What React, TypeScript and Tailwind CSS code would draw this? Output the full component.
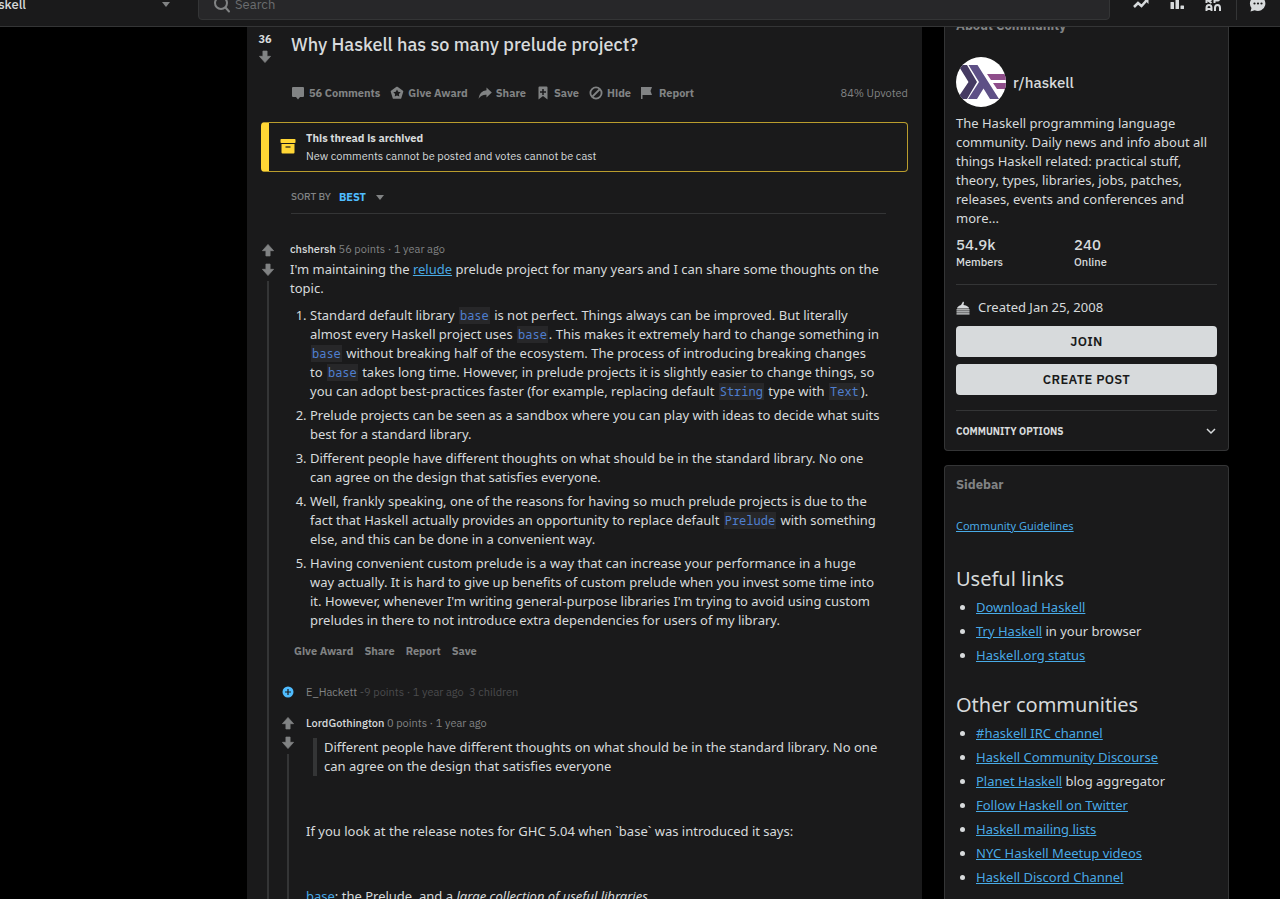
import type { ReactNode } from "react";

type LinkItem = { label: string; after?: string };

const usefulLinks: LinkItem[] = [
  { label: "Download Haskell" },
  { label: "Try Haskell", after: " in your browser" },
  { label: "Haskell.org status" },
];

const communities: LinkItem[] = [
  { label: "#haskell IRC channel" },
  { label: "Haskell Community Discourse" },
  { label: "Planet Haskell", after: " blog aggregator" },
  { label: "Follow Haskell on Twitter" },
  { label: "Haskell mailing lists" },
  { label: "NYC Haskell Meetup videos" },
  { label: "Haskell Discord Channel" },
];

const uiFont = "font-[family-name:'IBM_Plex_Sans','Inter',sans-serif]";

function Arrow({ down = false }: { down?: boolean }) {
  return (
    <svg
      viewBox="0 0 20 20"
      className={down ? "size-3.5 rotate-180" : "size-3.5"}
      fill="#818384"
      stroke="#818384"
      strokeWidth="1"
      strokeLinejoin="round"
    >
      <path d="M10 2 18 11H13v7.500H7V11H2Z" />
    </svg>
  );
}

function VoteButton({ down = false }: { down?: boolean }) {
  return (
    <button aria-label={down ? "downvote" : "upvote"} className="block">
      <Arrow down={down} />
    </button>
  );
}

function Caret() {
  return (
    <svg viewBox="0 0 8 5" className="h-[5px] w-2" fill="#818384">
      <path d="M0 0h8L4 5Z" />
    </svg>
  );
}

function HaskellLogo() {
  return (
    <svg viewBox="0 0 50 50" className="size-[50px] rounded-full bg-white">
      <path d="M2 8h9l10 17L11 42H1l11.500-17Z" fill="#453a62" />
      <path d="M12.500 8h9L43 42h-9l-6.500-10.500L21 42h-9l11-17Z" fill="#5e5086" />
      <path d="M31 17h19v6H35ZM37 26h13v6H41Z" fill="#8f4e8b" />
    </svg>
  );
}

function Code({ children }: { children: ReactNode }) {
  return (
    <code className="mx-px bg-[#272729] px-px font-[family-name:'Noto_Sans_Mono','DejaVu_Sans_Mono',monospace] text-xs leading-4 text-[#4f7fd0]">
      {children}
    </code>
  );
}

function TextLink({ children }: { children: ReactNode }) {
  return (
    <a href="#" className="text-[#4fbcff]/90 underline">
      {children}
    </a>
  );
}

function LinkList({ items }: { items: LinkItem[] }) {
  return (
    <ul className="list-disc space-y-[5px] pl-5">
      {items.map((item) => (
        <li key={item.label}>
          <TextLink>{item.label}</TextLink>
          {item.after}
        </li>
      ))}
    </ul>
  );
}

function Action({ icon, children }: { icon: ReactNode; children: ReactNode }) {
  return (
    <button className="flex items-center gap-1">
      {icon}
      {children}
    </button>
  );
}

function Header() {
  return (
    <header
      className={`relative z-10 -mt-[18px] flex h-[45px] shrink-0 items-center border-b border-[#343536] bg-[#1a1a1b] ${uiFont}`}
    >
      <button
        aria-label="r/haskell"
        className="flex w-[198px] shrink-0 items-center justify-between pr-7 text-[13px] font-medium text-[#d7dadc]"
      >
        <span className="flex w-[26px] justify-end overflow-hidden">r/haskell</span>
        <Caret />
      </button>
      <label className="flex h-8 flex-1 items-center gap-1 rounded border border-[#343536] bg-[#272729] pl-3.5">
        <svg viewBox="0 0 18 18" className="size-[18px]" fill="none" stroke="#818384" strokeWidth="2">
          <circle cx="8" cy="8" r="6" />
          <path d="m12.500 12.500 3.500 4" strokeLinecap="round" />
        </svg>
        <input
          aria-label="Search"
          placeholder="Search"
          className="flex-1 bg-transparent text-[13px] text-[#d7dadc] outline-none placeholder:text-[#6b6d6f]"
        />
      </label>
      <nav className="flex w-[170px] shrink-0 items-center pl-[22px] text-[#d7dadc]">
        <button aria-label="Popular" className="w-9">
          <svg viewBox="0 0 18 18" className="size-[18px]" fill="none" stroke="currentColor" strokeWidth="2.500">
            <path d="m2 12 4-4 3.500 3L15 5" />
            <path d="M10.500 3H16.500V9Z" fill="currentColor" stroke="none" />
          </svg>
        </button>
        <button aria-label="All" className="w-9">
          <svg viewBox="0 0 18 18" className="size-[18px]" fill="currentColor">
            <rect x="2.500" y="7" width="3.500" height="7" rx=".5" />
            <rect x="7.500" y="2" width="3.500" height="12" rx=".5" />
            <rect x="12.500" y="10.500" width="3.500" height="3.500" rx=".5" />
          </svg>
        </button>
        <button aria-label="Reddit Public Access Network" className="w-8">
          <svg viewBox="0 0 18 18" className="size-[18px]" fill="none" stroke="currentColor" strokeWidth="2">
            <path d="M2.500 8V2H6q1.500 0 1.500 1.500T6 5.500H4l3.500 2.500M10.500 8V2H14q1.500 0 1.500 1.500T14 5.500h-3.500" />
            <path d="M2.500 16v-3Q2.500 10 5 10t2.500 3v3M2.500 14h5M11 16v-3q0-3 2.500-3t2.500 3v3" />
          </svg>
        </button>
        <span className="mr-3 h-8 w-px bg-[#343536]" />
        <button aria-label="Chat">
          <svg viewBox="0 0 18 18" className="size-[18px]">
            <path d="M9 1a7.500 7.500 0 1 1-3.300 14.300L1.500 16.500l1-3.500A7.500 7.500 0 0 1 9 1Z" fill="currentColor" />
            <g fill="#1a1a1b">
              <circle cx="5.500" cy="8.500" r="1.100" />
              <circle cx="9" cy="8.500" r="1.100" />
              <circle cx="12.500" cy="8.500" r="1.100" />
            </g>
          </svg>
        </button>
      </nav>
    </header>
  );
}

function PostActions() {
  return (
    <div className="flex items-center justify-between text-[11px] leading-4 text-[#818384]">
      <div className="flex items-center gap-2.5 font-bold">
        <Action
          icon={
            <svg viewBox="0 0 14 14" className="size-3.5" fill="currentColor">
              <path d="M2 1h10q1 0 1 1v8q0 1-1 1H9l-2 2.500L5 11H2q-1 0-1-1V2q0-1 1-1Z" />
            </svg>
          }
        >
          56 Comments
        </Action>
        <Action
          icon={
            <svg viewBox="0 0 14 14" className="size-3.5">
              <path d="M7 1.500 12.500 5.500 10.500 12h-7L1.500 5.500Z" fill="currentColor" stroke="currentColor" strokeWidth="1.600" strokeLinejoin="round" />
              <path d="m7 3.500 1.200 2.300 2.500.4-1.800 1.800.4 2.500L7 9.400l-2.300 1.100.4-2.500-1.800-1.800 2.500-.4Z" fill="#1a1a1b" />
            </svg>
          }
        >
          Give Award
        </Action>
        <Action
          icon={
            <svg viewBox="0 0 14 14" className="size-3.5" fill="currentColor">
              <path d="M8.500 1.500 13.800 6.500 8.500 11.500V8.800Q3.500 8.500.500 12.800 1.500 5 8.500 4.300Z" />
            </svg>
          }
        >
          Share
        </Action>
        <Action
          icon={
            <svg viewBox="0 0 14 14" className="size-3.5">
              <path d="M3.500.500h7q1 0 1 1v12L7 10l-4.500 3.500v-12q0-1 1-1Z" fill="currentColor" />
              <path d="M7 3v6M4 6h6" stroke="#1a1a1b" strokeWidth="1.500" />
            </svg>
          }
        >
          Save
        </Action>
        <Action
          icon={
            <svg viewBox="0 0 14 14" className="size-3.5" fill="none" stroke="currentColor" strokeWidth="1.800">
              <circle cx="7" cy="7" r="5.600" />
              <path d="m3.500 10.500 7-7" />
            </svg>
          }
        >
          Hide
        </Action>
        <Action
          icon={
            <svg viewBox="0 0 14 14" className="size-3.5" fill="currentColor">
              <path d="M0 1h11L9.500 5 11 9H1.500v4H0Z" />
            </svg>
          }
        >
          Report
        </Action>
      </div>
      <span>84% Upvoted</span>
    </div>
  );
}

function Meta({ author, points }: { author: string; points: string }) {
  return (
    <div className={`text-[11px] leading-4 text-[#818384] ${uiFont}`}>
      <a href="#" className="font-medium text-[#d7dadc]">
        {author}
      </a>{" "}
      {points} · 1 year ago
    </div>
  );
}

// Vote arrows on top of the line that collapses the thread
function Rail() {
  return (
    <div className="flex w-3.5 shrink-0 flex-col items-center pt-px">
      <div className="flex flex-col gap-1.5">
        <VoteButton />
        <VoteButton down />
      </div>
      <div className="mt-1 w-0.5 flex-1 bg-[#343536]" />
    </div>
  );
}

function Post() {
  return (
    <main className="w-[675px] shrink-0 bg-[#1a1a1b] pr-3.5">
      <div className={`flex pt-1.5 ${uiFont}`}>
        <div className="flex w-9 shrink-0 flex-col items-center gap-[5px]">
          <span className="text-[11px] leading-3 font-bold text-[#d7dadc]">36</span>
          <VoteButton down />
        </div>
        <div className="min-w-0 flex-1 pl-2">
          <h1 className="text-lg leading-6 font-medium text-[#d7dadc]">
            Why Haskell has so many prelude project?
          </h1>
          <div className="mt-7">
            <PostActions />
          </div>
        </div>
      </div>

      <div
        className={`mt-[21px] ml-3.5 flex h-[50px] items-center gap-2.5 rounded border border-l-8 border-[#ffd635]/70 border-l-[#ffd635] pl-[11px] text-[11px] leading-[18px] text-[#d7dadc] ${uiFont}`}
      >
        <svg viewBox="0 0 16 16" className="size-4" fill="#ffd635">
          <rect x=".5" y="0" width="15" height="4" rx=".8" />
          <path d="M1.500 5h13v8.500q0 1-1 1h-11q-1 0-1-1Z" />
          <path d="M5.500 8h5" stroke="#1a1a1b" strokeWidth="1.200" />
        </svg>
        <div>
          <p className="font-bold">This thread is archived</p>
          <p>New comments cannot be posted and votes cannot be cast</p>
        </div>
      </div>

      <div
        className={`mt-4 mr-[22px] ml-11 flex items-center border-b border-[#343536] pb-[7px] text-[10px] leading-[18px] font-medium text-[#818384] ${uiFont}`}
      >
        SORT BY
        <button className="ml-2 flex items-center gap-2.5 text-[11px] font-bold text-[#4fbcff]">
          BEST
          <Caret />
        </button>
      </div>

      <article className="ml-3.5 flex gap-[15px] pt-7">
        <Rail />
        <div className="min-w-0 flex-1">
          <div className="pr-[26px]">
            <div className="-mt-px">
              <Meta author="chshersh" points="56 points" />
            </div>
            <p className="mt-[3px]">
              I'm maintaining the <TextLink>relude</TextLink> prelude project for many years and I can share some
              thoughts on the topic.
            </p>
            <ol className="mt-2 list-decimal space-y-[5px] pl-5">
              <li>
                Standard default library <Code>base</Code> is not perfect. Things always can be improved. But literally
                almost every Haskell project uses <Code>base</Code>. This makes it extremely hard to change something in{" "}
                <Code>base</Code> without breaking half of the ecosystem. The process of introducing breaking changes
                to&nbsp;<Code>base</Code> takes long time. However, in prelude projects it is slightly easier to change
                things, so you can adopt best-practices faster (for example, replacing default <Code>String</Code> type
                with <Code>Text</Code>).
              </li>
              <li>
                Prelude projects can be seen as a sandbox where you can play with ideas to decide what suits best for a
                standard library.
              </li>
              <li>
                Different people have different thoughts on what should be in the standard library. No one can agree on
                the design that satisfies everyone.
              </li>
              <li>
                Well, frankly speaking, one of the reasons for having so much prelude projects is due to the fact that
                Haskell actually provides an opportunity to replace default <Code>Prelude</Code> with something else,
                and this can be done in a convenient way.
              </li>
              <li>
                Having convenient custom prelude is a way that can increase your performance in a huge way actually. It
                is hard to give up benefits of custom prelude when you invest some time into it. However, whenever I'm
                writing general-purpose libraries I'm trying to avoid using custom preludes in there to not introduce
                extra dependencies for users of my library.
              </li>
            </ol>
            <div className={`mt-[13px] flex gap-[11px] pl-1 text-[11px] leading-4 font-bold text-[#818384] ${uiFont}`}>
              <button>Give Award</button>
              <button>Share</button>
              <button>Report</button>
              <button>Save</button>
            </div>
          </div>

          <div className={`mt-[25px] -ml-2 flex items-center gap-3 text-[11px] leading-4 text-[#4a4b4d] ${uiFont}`}>
            <button aria-label="Expand comment">
              <svg viewBox="0 0 12 12" className="size-3">
                <circle cx="6" cy="6" r="5.500" fill="#4fbcff" />
                <path d="M6 3v6M3 6h6" stroke="#1a1a1b" strokeWidth="1.200" />
              </svg>
            </button>
            <span>
              <a href="#" className="text-[#818384]">
                E_Hackett
              </a>{" "}
              -9 points · 1 year ago&nbsp; 3 children
            </span>
          </div>

          <div className="mt-[15px] -ml-[9px] flex gap-[11px]">
            <Rail />
            <div className="min-w-0 flex-1 pr-6">
              <Meta author="LordGothington" points="0 points" />
              <blockquote className="mt-[7px] ml-[7px] border-l-4 border-[#343536] pl-[7px]">
                Different people have different thoughts on what should be in the standard library. No one can agree on
                the design that satisfies everyone
              </blockquote>
              <p className="mt-[46px]">If you look at the release notes for GHC 5.04 when `base` was introduced it says:</p>
              <p className="mt-[46px]">
                <a href="#" className="text-[#4fbcff]/90">
                  base
                </a>
                : the Prelude, and a <em>large collection of useful libraries</em>.
              </p>
            </div>
          </div>
        </div>
      </article>
    </main>
  );
}

function Sidebar() {
  return (
    <aside className="flex w-[285px] shrink-0 flex-col">
      <section className="rounded-b border border-t-0 border-[#343536] bg-[#1a1a1b] px-[11px]">
        <h2 className={`-mt-2.5 text-[13px] leading-[18px] font-bold text-[#818384] ${uiFont}`}>About Community</h2>
        <div className="mt-[22px] flex items-center gap-[7px]">
          <HaskellLogo />
          <a href="#" className={`text-[15px] font-medium text-[#d7dadc] ${uiFont}`}>
            r/haskell
          </a>
        </div>
        <p className="mt-[7px]">
          The Haskell programming language community. Daily news and info about all things Haskell related: practical
          stuff, theory, types, libraries, jobs, patches, releases, events and conferences and more...
        </p>
        <dl className={`mt-2 grid grid-cols-[118px_1fr] font-medium text-[#d7dadc] ${uiFont}`}>
          <div>
            <dd className="text-[15px] leading-[18px]">54.9k</dd>
            <dt className="text-[11px] leading-4">Members</dt>
          </div>
          <div>
            <dd className="text-[15px] leading-[18px]">240</dd>
            <dt className="text-[11px] leading-4">Online</dt>
          </div>
        </dl>
        <hr className="mt-3.5 border-[#343536]" />
        <div className="mt-[13px] flex items-center gap-2">
          <svg viewBox="0 0 14 14" className="size-3.5" fill="#d7dadc">
            <path d="M1 7.500Q1 5.500 5 4L7 .500l1 .8L7.500 4Q13 5 13 7.500Z" />
            <path d="M.500 8.200h13v1.400H.500ZM.500 10.200h13v1.400H.500ZM.500 12.200h13v1.400H.500Z" />
          </svg>
          Created Jan 25, 2008
        </div>
        <div className={`mt-[9px] flex flex-col gap-[7px] text-[13px] font-semibold text-[#1a1a1b] ${uiFont}`}>
          <button className="h-[31px] rounded bg-[#d7dadc] tracking-wide">JOIN</button>
          <button className="h-[31px] rounded bg-[#d7dadc] tracking-wide">CREATE POST</button>
        </div>
        <hr className="mt-[15px] border-[#343536]" />
        <button
          className={`flex h-[39px] w-full items-center justify-between pt-px pr-px text-[10px] font-bold text-[#d7dadc] ${uiFont}`}
        >
          COMMUNITY OPTIONS
          <svg viewBox="0 0 10 10" className="size-2.5" fill="none" stroke="currentColor" strokeWidth="1.500">
            <path d="m1 3 4 4 4-4" />
          </svg>
        </button>
      </section>

      <section className="mt-3.5 flex-1 rounded-t border border-b-0 border-[#343536] bg-[#1a1a1b] px-[11px] pt-2.5">
        <h2 className={`text-[13px] leading-[18px] font-bold text-[#818384] ${uiFont}`}>Sidebar</h2>
        <p className="mt-6 text-[11px] leading-4">
          <TextLink>Community Guidelines</TextLink>
        </p>
        <h3 className="mt-8 mb-1.5 text-xl leading-[26px]">Useful links</h3>
        <LinkList items={usefulLinks} />
        <h3 className="mt-[27px] mb-1.5 text-xl leading-[26px]">Other communities</h3>
        <LinkList items={communities} />
      </section>
    </aside>
  );
}

export default function App() {
  return (
    <div className="flex h-screen flex-col overflow-hidden bg-black font-[family-name:'Noto_Sans',sans-serif] text-[13px] leading-[19px] text-[#d7dadc]">
      <Header />
      <div className="flex min-h-0 flex-1 justify-center gap-[22px] pl-[196px]">
        <Post />
        <Sidebar />
      </div>
    </div>
  );
}
